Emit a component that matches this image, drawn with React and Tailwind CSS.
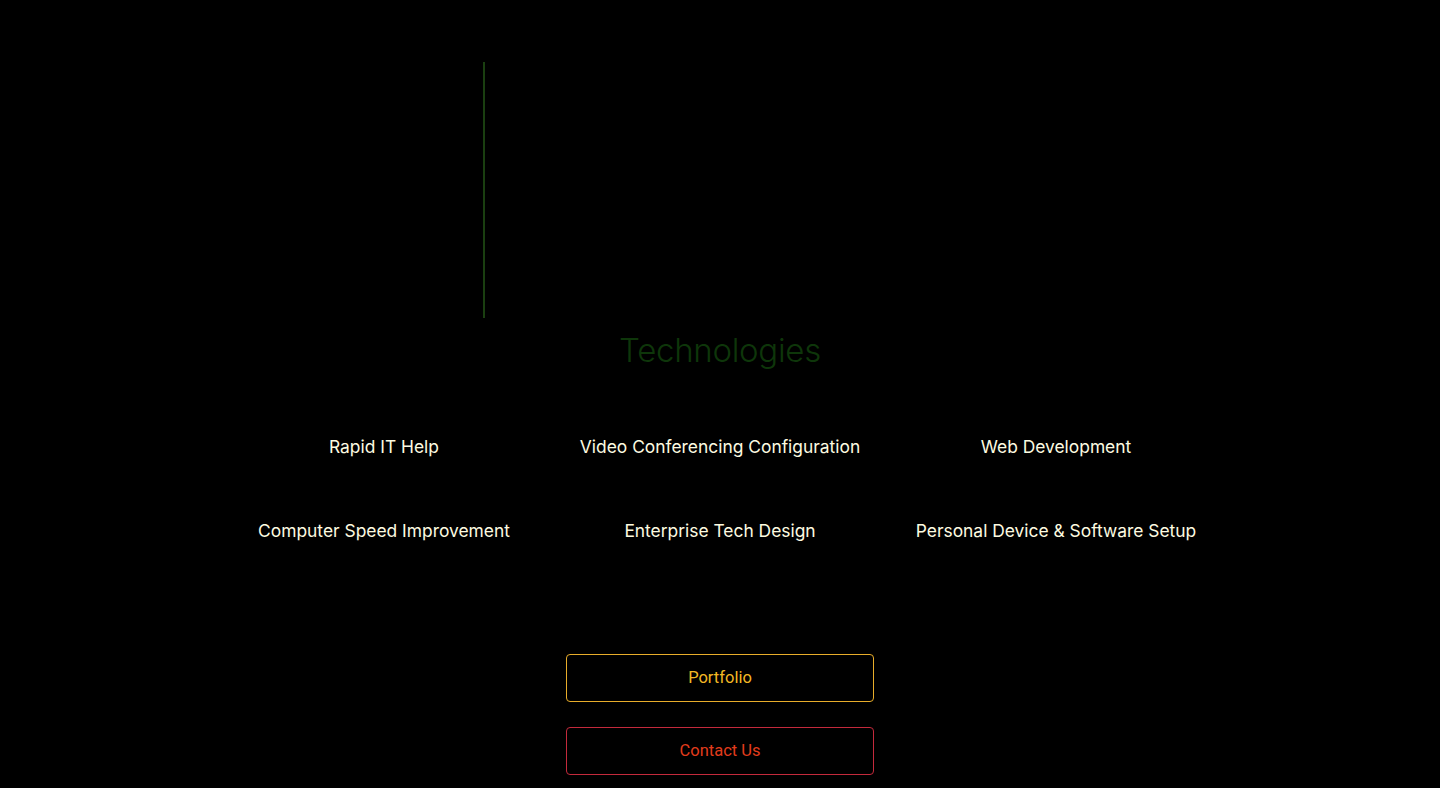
import React from 'react'

const SERVICES = [
  'Rapid IT Help',
  'Video Conferencing Configuration',
  'Web Development',
  'Computer Speed Improvement',
  'Enterprise Tech Design',
  'Personal Device & Software Setup',
]

export default function App() {
  return (
    <div className="min-h-screen bg-black font-['Inter','Liberation_Sans',sans-serif] overflow-hidden">
      <div className="w-[1008px] mx-auto pt-[62px]">
        <div className="ml-[267px] w-[2px] h-[256px] bg-[#1a3f10]" />
      </div>

      <h2 className="mt-[12px] text-center text-[33px] leading-[40px] font-light tracking-[-0.3px] text-[#0e360a]">
        Technologies
      </h2>

      <div className="w-[1008px] mx-auto mt-[64px] grid grid-cols-3 gap-y-[59px]">
        {SERVICES.map((s) => (
          <div key={s} className="text-center text-[17.4px] leading-[25px] text-[#fdfbe0]">
            {s}
          </div>
        ))}
      </div>

      <div className="flex flex-col items-center gap-[25px] mt-[111px]">
        <button className="w-[308px] h-[48px] rounded-[4px] border border-[#e8ad2a] text-[#f2b824] text-[16.5px] font-['Roboto',sans-serif]">
          Portfolio
        </button>
        <button className="w-[308px] h-[48px] rounded-[4px] border border-[#c42a3c] text-[#e23c1c] text-[16.5px] font-['Roboto',sans-serif]">
          Contact Us
        </button>
      </div>
    </div>
  )
}
